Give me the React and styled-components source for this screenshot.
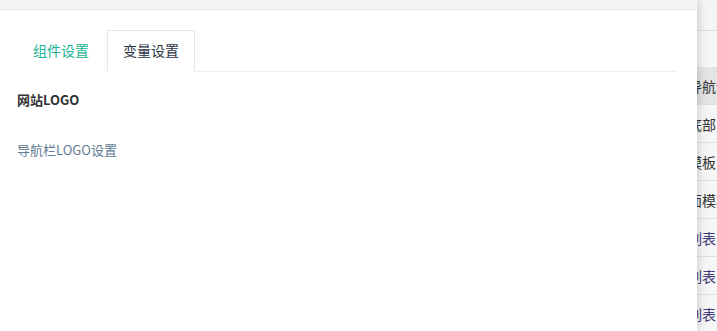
import React from "react";
import styled, { createGlobalStyle } from "styled-components";

const GlobalStyle = createGlobalStyle`
  html, body {
    margin: 0;
    padding: 0;
    background: #fff;
    font-family: "Noto Sans CJK SC", "Noto Sans", sans-serif;
  }
`;

const Page = styled.div`
  display: flex;
  width: 717px;
  height: 331px;
  overflow: hidden;
`;

const Drawer = styled.div`
  position: relative;
  z-index: 2;
  width: 697px;
  flex-shrink: 0;
  background: #fff;
  box-shadow: 2px 0 8px rgba(0, 0, 0, 0.16);
  display: flex;
  flex-direction: column;
`;

const TopBar = styled.div`
  height: 9px;
  background: #f5f5f5;
  border-bottom: 1px solid #e8e8e8;
`;

const Body = styled.div`
  padding: 20px 20px 0 17px;
`;

const TabBar = styled.div`
  display: flex;
  gap: 2px;
  border-bottom: 1px solid #eeeeee;
`;

const Tab = styled.div`
  box-sizing: border-box;
  height: 42px;
  padding: 0 15px 3px;
  display: flex;
  align-items: center;
  font-size: 14px;
  color: ${(p) => (p.$active ? "#2b3446" : "#1ab394")};
  border: 1px solid ${(p) => (p.$active ? "#e7e7e7" : "transparent")};
  border-bottom-color: ${(p) => (p.$active ? "#fff" : "transparent")};
  margin-bottom: -1px;
  background: #fff;
`;

const SectionTitle = styled.div`
  margin-top: 18px;
  font-size: 13px;
  line-height: 20px;
  font-weight: bold;
  color: #333;
`;

const FieldLabel = styled.div`
  margin-top: 30px;
  font-size: 13px;
  line-height: 20px;
  color: #5f7b92;
`;

const Behind = styled.div`
  flex: 1;
  overflow: hidden;
  background: #f3f3f3;
`;

const BehindInner = styled.div`
  margin-left: -37px;
  width: 200px;
`;

const BehindHead = styled.div`
  height: 30px;
  border-bottom: 1px solid #dddddd;
  background: #f4f4f4;
`;

const BehindGap = styled.div`
  height: 36px;
  background: #f6f6f6;
`;

const Row = styled.div`
  height: 37px;
  display: flex;
  align-items: center;
  font-size: 14px;
  color: ${(p) => (p.$link ? "#3f3d7a" : "#333")};
  background: ${(p) => (p.$active ? "#e4e4e4" : "#f6f6f6")};
  border-bottom: 1px solid #e0e0e0;
  white-space: nowrap;
`;

const rows = [
  { text: "顶部导航设置", active: true },
  { text: "网站底部" },
  { text: "首页模板" },
  { text: "单页面模板" },
  { text: "文章列表", link: true },
  { text: "产品列表", link: true },
  { text: "图片列表", link: true },
];

export default function App() {
  return (
    <>
      <GlobalStyle />
      <Page>
        <Drawer>
          <TopBar />
          <Body>
            <TabBar>
              <Tab>组件设置</Tab>
              <Tab $active>变量设置</Tab>
            </TabBar>
            <SectionTitle>网站LOGO</SectionTitle>
            <FieldLabel>导航栏LOGO设置</FieldLabel>
          </Body>
        </Drawer>
        <Behind>
          <BehindInner>
            <BehindHead />
            <BehindGap />
            {rows.map((r) => (
              <Row key={r.text} $active={r.active} $link={r.link}>
                {r.text}
              </Row>
            ))}
          </BehindInner>
        </Behind>
      </Page>
    </>
  );
}
